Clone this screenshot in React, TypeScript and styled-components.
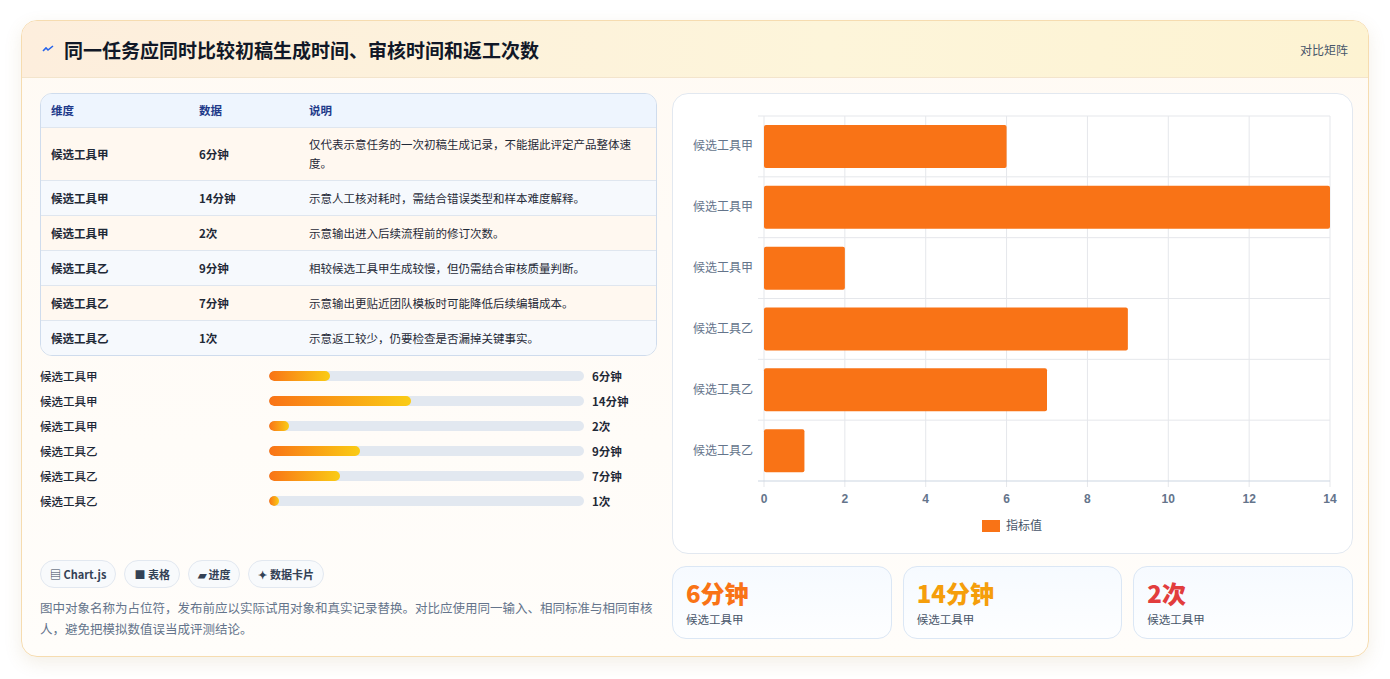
import React from "react";
import styled, { createGlobalStyle } from "styled-components";

const Global = createGlobalStyle`
  html,body{margin:0;padding:0;background:#fff;}
  body{font-family:"Noto Sans CJK SC","Noto Sans",sans-serif;}
  *{box-sizing:border-box;}
`;
const Page = styled.div`padding:20px 21px;width:1390px;`;
const Card = styled.div`
  width:1348px;height:637px;border:1px solid #f6dcb0;border-radius:16px;overflow:hidden;
  background:linear-gradient(180deg,#fffaf4,#fffdfa);box-shadow:0 6px 18px rgba(160,120,60,.12);
  display:flex;flex-direction:column;`;
const Header = styled.div`
  height:57px;flex:none;display:flex;align-items:center;justify-content:space-between;padding:0 20px;
  background:linear-gradient(90deg,#fdeedd,#fdf5da 60%,#fdf3d2);border-bottom:1px solid #f3e4cc;`;
const Title = styled.h1`margin:0;font-size:19px;font-weight:700;color:#111827;display:flex;align-items:center;gap:10px;`;
const Tag = styled.span`font-size:12px;color:#475569;`;
const Body = styled.div`flex:1;display:grid;grid-template-columns:617px 681px;gap:15px;padding:15px 17px 18px 18px;`;
const Left = styled.div`display:flex;flex-direction:column;`;
const Table = styled.div`border:1px solid #cfdced;border-radius:12px;overflow:hidden;font-size:11.5px;`;
const Row = styled.div<{ $bg: string; $h: number }>`
  display:grid;grid-template-columns:148px 110px 1fr;padding:0 10px;min-height:${p => p.$h}px;align-items:center;
  background:${p => p.$bg};border-top:1px solid #dfe6ef;color:#1f2937;line-height:19px;
  &:first-child{border-top:none;}`;
const HCell = styled.div`color:#1e3a8a;font-weight:600;`;
const Cell = styled.div<{ $b?: boolean }>`font-weight:${p => (p.$b ? 600 : 400)};padding:7px 0;padding-right:8px;`;
const Bars = styled.div`display:flex;flex-direction:column;gap:8px;margin-top:11px;`;
const BarRow = styled.div`display:grid;grid-template-columns:229px 315px 1fr;gap:0 0;align-items:center;height:17px;font-size:11.5px;color:#1f2937;font-weight:500;`;
const Track = styled.div`height:10px;border-radius:5px;background:#e2e8f0;overflow:hidden;`;
const Fill = styled.div`height:100%;border-radius:5px;background:linear-gradient(90deg,#f97316,#facc15);`;
const Val = styled.div`padding-left:8px;font-weight:700;`;
const Chips = styled.div`display:flex;gap:8px;margin-top:auto;`;
const Chip = styled.div`height:28px;padding:0 9px;border:1px solid #e2e8f0;border-radius:14px;background:#f8fafc;display:flex;align-items:center;gap:4px;font-size:11px;font-weight:600;color:#334155;`;
const Note = styled.p`margin:9px 0 0;font-size:12.5px;line-height:21px;color:#64748b;`;
const Right = styled.div`display:flex;flex-direction:column;gap:12px;`;
const ChartBox = styled.div`height:461px;border:1px solid #e2e8f0;border-radius:16px;background:#fff;overflow:hidden;`;
const Stats = styled.div`display:grid;grid-template-columns:repeat(3,1fr);gap:11px;`;
const Stat = styled.div`height:73px;border:1px solid #dbe7f5;border-radius:14px;background:linear-gradient(180deg,#f6faff,#fdfeff);padding:10px 13px;`;
const StatV = styled.div<{ $c: string }>`font-size:24px;font-weight:800;color:${p => p.$c};line-height:32px;`;
const StatL = styled.div`font-size:11.5px;color:#475569;margin-top:2px;`;

const rows = [
  ["候选工具甲", "6分钟", "仅代表示意任务的一次初稿生成记录，不能据此评定产品整体速度。", 6],
  ["候选工具甲", "14分钟", "示意人工核对耗时，需结合错误类型和样本难度解释。", 14],
  ["候选工具甲", "2次", "示意输出进入后续流程前的修订次数。", 2],
  ["候选工具乙", "9分钟", "相较候选工具甲生成较慢，但仍需结合审核质量判断。", 9],
  ["候选工具乙", "7分钟", "示意输出更贴近团队模板时可能降低后续编辑成本。", 7],
  ["候选工具乙", "1次", "示意返工较少，仍要检查是否漏掉关键事实。", 1],
] as const;

const Chart = () => {
  const x0 = 91, x1 = 657, y0 = 22, y1 = 387, band = (y1 - y0) / 6, k = (x1 - x0) / 14;
  return (
    <svg width="681" height="461" style={{ display: "block" }}>
      {[0, 2, 4, 6, 8, 10, 12, 14].map(t => (
        <g key={t}>
          <line x1={x0 + t * k} x2={x0 + t * k} y1={y0} y2={y1 + 6} stroke="#e5e7eb" />
          <text x={x0 + t * k} y={409} textAnchor="middle" fontSize="12" fill="#64748b" fontFamily="Liberation Sans,sans-serif" fontWeight="600">{t}</text>
        </g>
      ))}
      {rows.map((r, i) => (
        <g key={i}>
          <line x1={x0 - 6} x2={x1} y1={y0 + i * band} y2={y0 + i * band} stroke="#e5e7eb" />
          <rect x={x0} y={y0 + i * band + 9} width={(r[3] as number) * k} height={43} fill="#f97316" rx="2" />
          <text x={x0 - 11} y={y0 + i * band + band / 2 + 4} textAnchor="end" fontSize="12" fill="#64748b">{r[0]}</text>
        </g>
      ))}
      <line x1={x0 - 6} x2={x1} y1={y1} y2={y1} stroke="#cbd5e1" />
      <rect x={309} y={426} width={18} height={12} fill="#f97316" />
      <text x={333} y={436} fontSize="12" fill="#475569">指标值</text>
    </svg>
  );
};

export default function App() {
  const bg = ["#fff8f0", "#f6f9fd"];
  return (
    <Page>
      <Global />
      <Card>
        <Header>
          <Title>
            <svg width="12" height="10" viewBox="0 0 12 10"><path d="M1 7 L4 4 L6 6 L11 2" stroke="#2563eb" strokeWidth="1.6" fill="none" /></svg>
            同一任务应同时比较初稿生成时间、审核时间和返工次数
          </Title>
          <Tag>对比矩阵</Tag>
        </Header>
        <Body>
          <Left>
            <Table>
              <Row $bg="#eef5fe" $h={33}><HCell>维度</HCell><HCell>数据</HCell><HCell>说明</HCell></Row>
              {rows.map((r, i) => (
                <Row key={i} $bg={bg[i % 2]} $h={35}>
                  <Cell $b>{r[0]}</Cell><Cell $b>{r[1]}</Cell><Cell>{r[2]}</Cell>
                </Row>
              ))}
            </Table>
            <Bars>
              {rows.map((r, i) => (
                <BarRow key={i}>
                  <span>{r[0]}</span>
                  <Track><Fill style={{ width: `${((r[3] as number) / 31) * 100}%` }} /></Track>
                  <Val>{r[1]}</Val>
                </BarRow>
              ))}
            </Bars>
            <Chips>
              <Chip>▤ Chart.js</Chip><Chip>■ 表格</Chip><Chip>▰ 进度</Chip><Chip>✦ 数据卡片</Chip>
            </Chips>
            <Note>图中对象名称为占位符，发布前应以实际试用对象和真实记录替换。对比应使用同一输入、相同标准与相同审核人，避免把模拟数值误当成评测结论。</Note>
          </Left>
          <Right>
            <ChartBox><Chart /></ChartBox>
            <Stats>
              <Stat><StatV $c="#f97316">6分钟</StatV><StatL>候选工具甲</StatL></Stat>
              <Stat><StatV $c="#f59e0b">14分钟</StatV><StatL>候选工具甲</StatL></Stat>
              <Stat><StatV $c="#e23d3d">2次</StatV><StatL>候选工具甲</StatL></Stat>
            </Stats>
          </Right>
        </Body>
      </Card>
    </Page>
  );
}
